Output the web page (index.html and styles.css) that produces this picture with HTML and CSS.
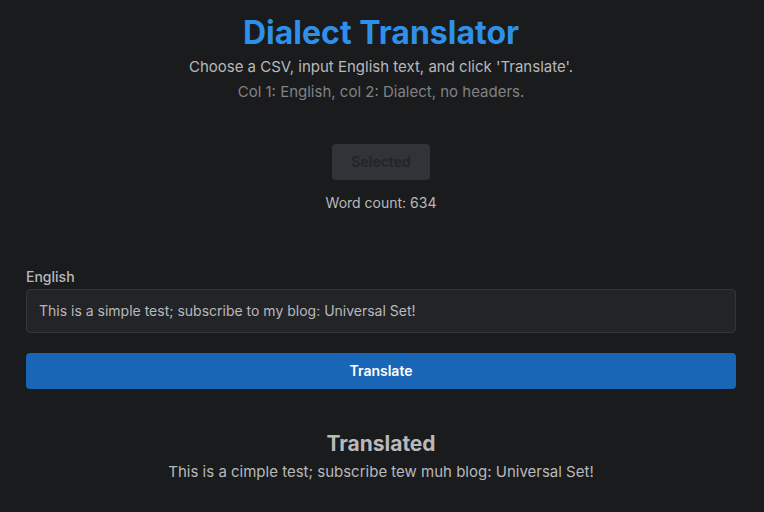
FILE: index.html
```html
<!DOCTYPE html>
<html lang="en">
<head>
<meta charset="utf-8">
<meta name="viewport" content="width=device-width, initial-scale=1">
<title>Dialect Translator</title>
<link rel="stylesheet" href="styles.css">
</head>
<body>
<main class="app">
  <header class="intro">
    <h1 class="title">Dialect Translator</h1>
    <p class="text">Choose a CSV, input English text, and click 'Translate'.</p>
    <p class="text dimmed">Col 1: English, col 2: Dialect, no headers.</p>
  </header>
  <section class="upload">
    <button class="button" type="button" disabled>Selected</button>
    <p class="count">Word count: 634</p>
  </section>
  <form class="form">
    <div class="field">
      <label class="label" for="english">English</label>
      <input class="input" id="english" type="text" value="This is a simple test; subscribe to my blog: Universal Set!">
    </div>
    <button class="button primary" type="button">Translate</button>
  </form>
  <section class="result">
    <h2 class="subtitle">Translated</h2>
    <p class="text">This is a cimple test; subscribe tew muh blog: Universal Set!</p>
  </section>
</main>
</body>
</html>
```

FILE: styles.css
```css
* {
  box-sizing: border-box;
}

body {
  margin: 0;
  background: #1a1b1d;
  color: #b8b9bb;
  font-family: Inter, "Liberation Sans", sans-serif;
  font-size: 15px;
  line-height: 25px;
}

h1, h2, p {
  margin: 0;
}

.app {
  display: flex;
  flex-direction: column;
  gap: 40px;
  padding: 12px 28px 28px 26px;
  text-align: center;
}

.title {
  color: #2e90e9;
  font-size: 32px;
  font-weight: 700;
  line-height: 42px;
}

.dimmed {
  color: #818285;
}

.upload {
  display: flex;
  flex-direction: column;
  align-items: center;
  gap: 12px;
  padding-bottom: 12px;
}

.count {
  font-size: 14px;
  line-height: 21px;
}

.button {
  height: 36px;
  padding: 0 18px 2px;
  border: 1px solid transparent;
  border-radius: 4px;
  font-family: inherit;
  font-size: 14px;
  font-weight: 600;
}

.button:disabled {
  background: #303338;
  color: #222427;
}

.primary {
  background: #1966b6;
  color: #fff;
}

.form {
  display: flex;
  flex-direction: column;
  gap: 20px;
}

.field {
  display: flex;
  flex-direction: column;
  text-align: left;
}

.label {
  font-size: 14px;
  font-weight: 500;
  line-height: 24px;
}

.input {
  width: 100%;
  height: 44px;
  padding: 0 12px 2px;
  border: 1px solid #35363a;
  border-radius: 4px;
  background: #232428;
  color: inherit;
  font-family: inherit;
  font-size: 14px;
}

.subtitle {
  font-size: 21px;
  font-weight: 700;
  line-height: 30px;
}
```
